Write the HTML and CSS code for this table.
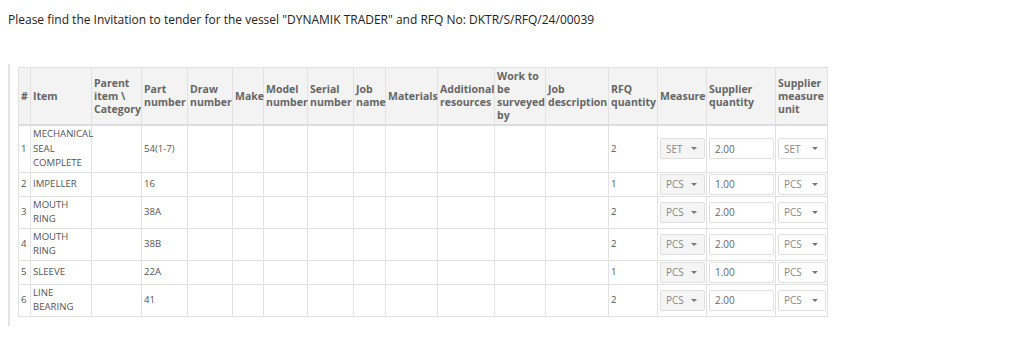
FILE: index.html
```html
<!DOCTYPE html>
<html>
<head>
<meta charset="utf-8">
<link rel="stylesheet" href="styles.css">
</head>
<body>
<p class="intro">Please find the Invitation to tender for the vessel "DYNAMIK TRADER" and RFQ No: DKTR/S/RFQ/24/00039</p>
<div class="panel">
<table class="grid">
<colgroup>
<col class="c1"><col class="c2"><col class="c3"><col class="c4"><col class="c5"><col class="c6"><col class="c7"><col class="c8"><col class="c9"><col class="c10"><col class="c11"><col class="c12"><col class="c13"><col class="c14"><col class="c15"><col class="c16"><col class="c17">
</colgroup>
<thead>
<tr>
<th>#</th><th>Item</th><th>Parent item \ Category</th><th>Part number</th><th>Draw number</th><th>Make</th><th>Model number</th><th>Serial number</th><th>Job name</th><th>Materials</th><th>Additional resources</th><th>Work to be surveyed by</th><th>Job description</th><th>RFQ quantity</th><th>Measure</th><th>Supplier quantity</th><th>Supplier measure unit</th>
</tr>
</thead>
<tbody>
<tr><td>1</td><td>MECHANICAL SEAL COMPLETE</td><td></td><td>54(1-7)</td><td></td><td></td><td></td><td></td><td></td><td></td><td></td><td></td><td></td><td>2</td><td><span class="sel dis">SET<i class="caret"></i></span></td><td><span class="inp">2.00</span></td><td><span class="sel">SET<i class="caret"></i></span></td></tr>
<tr><td>2</td><td>IMPELLER</td><td></td><td>16</td><td></td><td></td><td></td><td></td><td></td><td></td><td></td><td></td><td></td><td>1</td><td><span class="sel dis">PCS<i class="caret"></i></span></td><td><span class="inp">1.00</span></td><td><span class="sel">PCS<i class="caret"></i></span></td></tr>
<tr><td>3</td><td>MOUTH RING</td><td></td><td>38A</td><td></td><td></td><td></td><td></td><td></td><td></td><td></td><td></td><td></td><td>2</td><td><span class="sel dis">PCS<i class="caret"></i></span></td><td><span class="inp">2.00</span></td><td><span class="sel">PCS<i class="caret"></i></span></td></tr>
<tr><td>4</td><td>MOUTH RING</td><td></td><td>38B</td><td></td><td></td><td></td><td></td><td></td><td></td><td></td><td></td><td></td><td>2</td><td><span class="sel dis">PCS<i class="caret"></i></span></td><td><span class="inp">2.00</span></td><td><span class="sel">PCS<i class="caret"></i></span></td></tr>
<tr><td>5</td><td>SLEEVE</td><td></td><td>22A</td><td></td><td></td><td></td><td></td><td></td><td></td><td></td><td></td><td></td><td>1</td><td><span class="sel dis">PCS<i class="caret"></i></span></td><td><span class="inp">1.00</span></td><td><span class="sel">PCS<i class="caret"></i></span></td></tr>
<tr><td>6</td><td>LINE BEARING</td><td></td><td>41</td><td></td><td></td><td></td><td></td><td></td><td></td><td></td><td></td><td></td><td>2</td><td><span class="sel dis">PCS<i class="caret"></i></span></td><td><span class="inp">2.00</span></td><td><span class="sel">PCS<i class="caret"></i></span></td></tr>
</tbody>
</table>
</div>
</body>
</html>
```
FILE: styles.css
```css
html, body { margin: 0; padding: 0; background: #fff; }
body { padding: 11px 8px 0 8px; font-family: "Open Sans", "Liberation Sans", sans-serif; }
.intro { margin: 0; font-size: 12px; line-height: 18px; color: #222; }
.panel { margin-top: 35px; border-left: 2px solid #e4e4e4; padding: 3px 0 9px 8px; width: 809px; }
.grid { border-collapse: collapse; table-layout: fixed; width: 810px; font-size: 9.6px; color: #555; }
.grid th, .grid td { border: 1px solid #e2e2e2; padding: 1px 1px 1px 2px; vertical-align: middle; text-align: left; }
.grid th { background: #f3f3f3; font-weight: bold; color: #666; font-size: 10.5px; line-height: 13px; border-bottom: 2px solid #dcdcdc; padding: 2px 1px 2px 2px; }
.grid td { line-height: 14.5px; }
.c1 { width: 12px; } .c2 { width: 61px; } .c3 { width: 50px; } .c4 { width: 46px; } .c5 { width: 45px; }
.c6 { width: 31px; } .c7 { width: 44px; } .c8 { width: 46px; } .c9 { width: 32px; } .c10 { width: 52px; }
.c11 { width: 57px; } .c12 { width: 51px; } .c13 { width: 63px; } .c14 { width: 49px; } .c15 { width: 49px; }
.c16 { width: 69px; } .c17 { width: 52px; }
.sel, .inp { display: flex; align-items: center; box-sizing: border-box; height: 21px; border: 1px solid #e0e0e0; border-radius: 2px; padding: 0 5px; color: #888; font-size: 10px; }
.sel { justify-content: space-between; background: #fff; }
.sel.dis { background: #f5f5f5; }
.inp { color: #666; }
.caret { width: 0; height: 0; border-left: 3px solid transparent; border-right: 3px solid transparent; border-top: 3px solid #777; margin-right: 2px; }
```
